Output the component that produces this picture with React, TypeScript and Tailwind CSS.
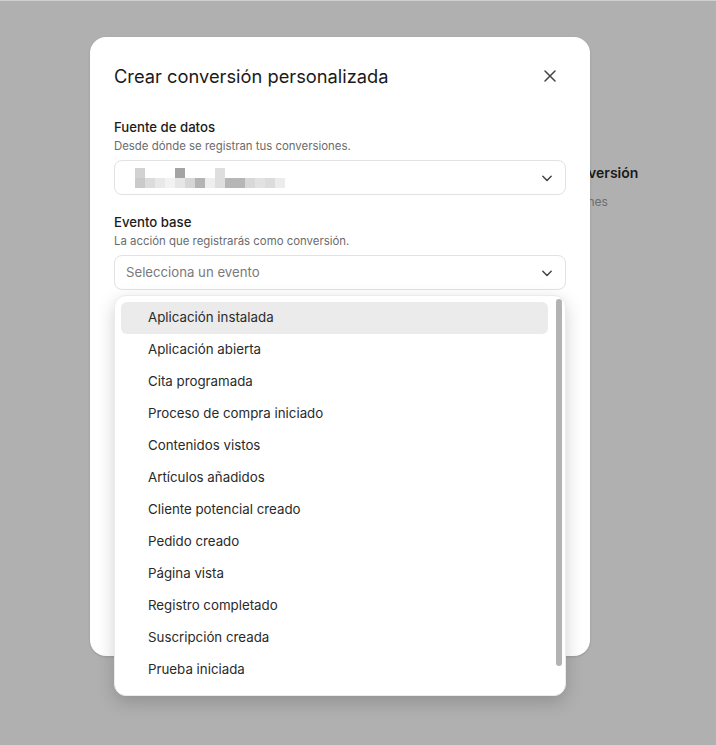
import * as React from "react";

const events = [
  "Aplicación instalada",
  "Aplicación abierta",
  "Cita programada",
  "Proceso de compra iniciado",
  "Contenidos vistos",
  "Artículos añadidos",
  "Cliente potencial creado",
  "Pedido creado",
  "Página vista",
  "Registro completado",
  "Suscripción creada",
  "Prueba iniciada",
];

// pixelated (redacted) data source name
const topRow: Record<number, string> = { 0: "#d2d2d2", 4: "#a4a4a4", 8: "#dedede" };
const bottomRow = [
  "#cacaca", "#dcdcdc", "#e8e8e8", "#f2f2f2", "#e6e6e6", "#d6d6d6", "#b4b4b4",
  "#eeeeee", "#dedede", "#b6b6b6", "#b6b6b6", "#d8d8d8", "#e2e2e2", "#dcdcdc", "#ececec",
];

function Chevron() {
  return (
    <svg viewBox="0 0 24 24" className="size-5 text-[#444]" fill="none" stroke="currentColor" strokeWidth={1.8} strokeLinecap="round" strokeLinejoin="round">
      <path d="m7 10 5 5 5-5" />
    </svg>
  );
}

function Pixelated() {
  return (
    <div className="flex flex-col">
      <div className="flex">
        {bottomRow.map((_, i) => (
          <span key={i} className="h-[10px] w-[10px]" style={{ background: topRow[i] ?? "transparent" }} />
        ))}
      </div>
      <div className="flex">
        {bottomRow.map((c, i) => (
          <span key={i} className="h-[10px] w-[10px]" style={{ background: c }} />
        ))}
      </div>
    </div>
  );
}

function Field({
  label,
  hint,
  children,
}: {
  label: string;
  hint: string;
  children: React.ReactNode;
}) {
  return (
    <div>
      <div className="text-[13.2px] font-medium leading-5 text-[#1c1c1c]">{label}</div>
      <div className="mt-px text-[11.4px] leading-4 text-[#6b6b6b]">{hint}</div>
      <div className="mt-1.5 flex h-[35px] items-center justify-between rounded-lg border border-[#e2e2e2] bg-white pl-[11px] pr-2">
        {children}
        <Chevron />
      </div>
    </div>
  );
}

export default function App() {
  return (
    <div
      className="relative min-h-screen overflow-hidden border-t border-[#cfcfcf] bg-[#b0b0b0] pl-[522px] pt-[162px]"
      style={{ fontFamily: "Inter, 'Noto Sans', sans-serif" }}
    >
      {/* page behind the overlay */}
      <div className="text-[14px] font-semibold leading-5 text-[#1a1a1a]">Crear conversión</div>
      <div className="-ml-[11px] mt-[11px] text-[12px] leading-4 text-[#6e6e6e]">Sin conversiones</div>

      {/* dialog */}
      <div className="absolute left-[90px] top-[36px] h-[619px] w-[500px] rounded-2xl bg-white px-6 pt-[25px] shadow-sm">
        <div className="flex items-center justify-between">
          <h2 className="text-[18.3px] leading-7 text-[#1a1a1a]">Crear conversión personalizada</h2>
          <svg viewBox="0 0 24 24" className="mr-[6px] size-5 text-[#444]" fill="none" stroke="currentColor" strokeWidth={1.8} strokeLinecap="round">
            <path d="M18 6 6 18M6 6l12 12" />
          </svg>
        </div>

        <div className="mt-[27px] flex flex-col gap-[17px]">
          <Field label="Fuente de datos" hint="Desde dónde se registran tus conversiones.">
            <div className="ml-[9px]">
              <Pixelated />
            </div>
          </Field>
          <div className="relative">
            <Field label="Evento base" hint="La acción que registrarás como conversión.">
              <span className="text-[13.2px] text-[#7a7a7a]">Selecciona un evento</span>
            </Field>

            {/* open listbox */}
            <div className="absolute left-0 right-0 top-[calc(100%+5px)] z-10 h-[401px] overflow-hidden rounded-xl border border-[#ececec] bg-white pl-1.5 pr-[17px] pt-1.5 shadow-[0_6px_18px_rgba(0,0,0,0.18)]">
              <ul>
                {events.map((e, i) => (
                  <li
                    key={e}
                    className={
                      "flex h-8 items-center rounded-md pl-[27px] text-[13.3px] text-[#2a2a2a] " +
                      (i === 0 ? "bg-[#ebebeb]" : "")
                    }
                  >
                    {e}
                  </li>
                ))}
              </ul>
              <div className="absolute right-[3px] top-[3px] h-[367px] w-[6px] rounded-full bg-[#b3b3b3]" />
            </div>
          </div>
        </div>
      </div>
    </div>
  );
}
